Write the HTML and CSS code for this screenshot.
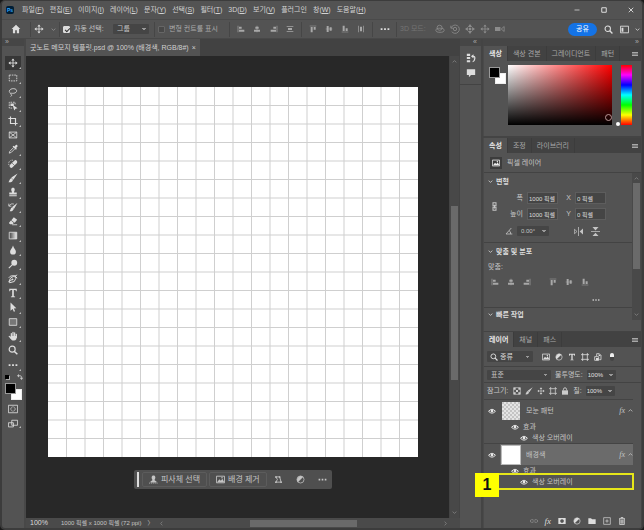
FILE: index.html
```html
<!DOCTYPE html>
<html lang="ko">
<head>
<meta charset="utf-8">
<title>굿노트 메모지 템플릿.psd</title>
<link rel="stylesheet" href="styles.css">
</head>
<body>
<svg class="sprite" aria-hidden="true">
  <symbol id="home" viewBox="0 0 12 12"><path fill="currentColor" d="M6 1 .8 6H2.3v5H5V7.500h2V11h2.700V6h1.500z"/></symbol>
  <symbol id="move" viewBox="0 0 12 12"><path fill="none" stroke="currentColor" d="M6 2v8M2 6h8"/><path fill="currentColor" d="M6 .5 8 3H4zM6 11.500 8 9H4zM.5 6 3 4v4zM11.500 6 9 4v4z"/></symbol>
  <symbol id="pan3d" viewBox="0 0 12 12"><path fill="currentColor" d="M6 0 8.500 3.500h-5zM6 12l2.500-3.500h-5zM0 6l3.500-2.500v5zM12 6 8.500 3.500v5zM4.500 4.500h3v3h-3z"/></symbol>
  <symbol id="marquee" viewBox="0 0 12 12"><path fill="none" stroke="currentColor" stroke-dasharray="2 1" d="M1.500 2.500h9v7h-9z"/></symbol>
  <symbol id="lasso" viewBox="0 0 12 12"><path fill="none" stroke="currentColor" d="M3 7.500C-.5 5 3 1.500 7 2c5 .5 4 5 0 5.500-2 .4-4-.6-4 .6s2 .8 1.500 2L3 11.500"/></symbol>
  <symbol id="pick" viewBox="0 0 12 12"><path fill="none" stroke="currentColor" stroke-dasharray="2 1" d="M5 8.500H1.500v-7h7V4"/><path fill="currentColor" d="M3 3h4v3H3zM5.500 4.500l6 4.300-2.500.4-1.500 2.300z"/></symbol>
  <symbol id="crop" viewBox="0 0 12 12"><path fill="none" stroke="currentColor" stroke-width="1.400" d="M3 .5V9h8.500M.5 3H9v8.500"/></symbol>
  <symbol id="frame" viewBox="0 0 12 12"><path fill="none" stroke="currentColor" d="M1.500 2.500h9v7h-9zl9 7m0-7-9 7"/></symbol>
  <symbol id="dropper" viewBox="0 0 12 12"><path fill="none" stroke="currentColor" d="M7 4 2 9l-.5 2L4 10l4.500-4.500"/><path fill="currentColor" d="m5.500 3 1-1L8 3c1-2 2-2.500 3-1.500s.5 2-1 3l.5 1.500-1 1z"/></symbol>
  <symbol id="heal" viewBox="0 0 12 12"><path stroke="currentColor" stroke-width="4.200" stroke-linecap="round" d="M4 8.500 9 3.500"/><path stroke="#535353" stroke-width=".8" d="m5 5 3 3"/><path fill="none" stroke="currentColor" stroke-dasharray="1 1" d="M1 7C0 3 3 1 6 1.500"/></symbol>
  <symbol id="brush" viewBox="0 0 12 12"><path fill="currentColor" d="M11.500.5 6.500 8 4 5.500zM4 6 6 8C5.500 11 3 11.500.5 11 2 10 1.500 7 4 6z"/></symbol>
  <symbol id="stamp" viewBox="0 0 12 12"><path fill="currentColor" d="M5 6.500C3 3 4 1 6 1s3 2 1 5.500h3.500V9h-9V6.500zM1.500 10h9v1h-9z"/></symbol>
  <symbol id="history" viewBox="0 0 12 12"><path fill="currentColor" d="M11.500 1 7.300 8 5 6zM5 6.200 7 8C6 11 4 11.500 2 11c1-1 1-4 3-4.800z"/><path fill="none" stroke="currentColor" d="M1 2v3h3M1.500 4.500C3 2 5 2 7 2.500"/></symbol>
  <symbol id="eraser" viewBox="0 0 12 12"><path fill="currentColor" d="m7 1.500 4 3L8 8 4 5zM3.500 5.500 7 8.500 5.500 10h-3L1 8.500z"/><path stroke="currentColor" d="M5 10.500h6"/></symbol>
  <symbol id="gradient" viewBox="0 0 12 12"><linearGradient id="fade"><stop stop-color="#444"/><stop offset="1" stop-color="#eee"/></linearGradient><path fill="url(#fade)" stroke="currentColor" d="M1.500 1.500h9v8h-9z"/></symbol>
  <symbol id="drop" viewBox="0 0 12 12"><path fill="currentColor" d="M6 .5C7 4 9.500 5.500 9.500 8a3.500 3.500 0 0 1-7 0C2.500 5.500 5 4 6 .5z"/></symbol>
  <symbol id="dodge" viewBox="0 0 12 12"><circle cx="7.500" cy="4.500" r="3.500" fill="currentColor"/><path stroke="currentColor" stroke-width="1.300" d="M5 7 1 11"/></symbol>
  <symbol id="pen" viewBox="0 0 12 12"><path fill="none" stroke="currentColor" stroke-width="1.200" d="M1 9.500 3 5l4-2.500L9.500 5 7.500 9 2 10.500zl4-3M1 4.500C4 0 8 4 11 1M8 2l3 3"/><circle cx="5.500" cy="6.500" r="1" fill="currentColor"/></symbol>
  <symbol id="type" viewBox="0 0 12 12"><path fill="currentColor" d="M1.500 1h9v3h-1l-.5-1.500H7V10l1.500.3V11h-5v-.7L5 10V2.500H3L2.500 4h-1z"/></symbol>
  <symbol id="arrow" viewBox="0 0 12 12"><path fill="currentColor" d="M3 .5 10 7.500 7 7.700 8.500 11 7 11.700 5.500 8.500 3 10.500z"/></symbol>
  <symbol id="rect" viewBox="0 0 12 12"><path fill="#777" stroke="currentColor" d="M1.500 2h9v8h-9z"/></symbol>
  <symbol id="hand" viewBox="0 0 12 12"><path fill="none" stroke="currentColor" stroke-width="1.500" stroke-linecap="round" d="M4 7V3m2 4V1.500M8 7V2.300M10 7.500V4M1.500 6.500 4 9"/><path fill="currentColor" d="M3.300 6h7.400c0 3-1 5.500-3.500 5.500S4.500 11 3 9z"/></symbol>
  <symbol id="zoom" viewBox="0 0 12 12"><circle cx="5" cy="5" r="3.600" fill="none" stroke="currentColor" stroke-width="1.400"/><path stroke="currentColor" stroke-width="1.800" d="m7.700 7.700 3.500 3.500"/></symbol>
  <symbol id="dots" viewBox="0 0 12 12"><path fill="currentColor" d="M.8 5H3v2.200H.8zM4.900 5h2.200v2.200H4.900zM9 5h2.200v2.200H9z"/></symbol>
  <symbol id="mask" viewBox="0 0 12 12"><path fill="none" stroke="currentColor" d="M.5 1.500h11v9H.5z"/><circle cx="6" cy="6" r="2.600" fill="none" stroke="currentColor" stroke-dasharray="1 .5"/></symbol>
  <symbol id="screen" viewBox="0 0 12 12"><path fill="#535353" stroke="currentColor" d="M4.500 1.500h7v6h-7zM.5 4.500h6v5h-6z"/></symbol>
  <symbol id="swap" viewBox="0 0 12 12"><path fill="none" stroke="currentColor" stroke-width="1.800" d="M3 3.500h3.500Q9 3.500 9 7v1"/><path fill="currentColor" d="M0 3.500 4 0v7zM5.500 7.500h7L9 12z"/></symbol>
  <symbol id="al" viewBox="0 0 12 12"><path fill="currentColor" d="M1 1h1v10H1zM3 2.500h4v3H3zM3 7h8v3H3z"/></symbol>
  <symbol id="ac" viewBox="0 0 12 12"><path fill="currentColor" d="M5.500 1h1v10h-1zM3.500 2.500h5v3h-5zM1.500 7h9v3h-9z"/></symbol>
  <symbol id="ar" viewBox="0 0 12 12"><path fill="currentColor" d="M10 1h1v10h-1zM5 2.500h4v3H5zM1 7h8v3H1z"/></symbol>
  <symbol id="at" viewBox="0 0 12 12"><path fill="currentColor" d="M1 1h10v1H1zM2.500 3h3v8h-3zM7 3h3v4H7z"/></symbol>
  <symbol id="am" viewBox="0 0 12 12"><path fill="currentColor" d="M1 5.500h10v1H1zM2.500 1.500h3v9h-3zM7 3.500h3v5H7z"/></symbol>
  <symbol id="ab" viewBox="0 0 12 12"><path fill="currentColor" d="M1 10h10v1H1zM2.500 1h3v8h-3zM7 5h3v4H7z"/></symbol>
  <symbol id="dv" viewBox="0 0 12 12"><path fill="currentColor" d="M1 1.500h10v1H1zM1 9.500h10v1H1zM3 4.500h6v3H3z"/></symbol>
  <symbol id="dh" viewBox="0 0 12 12"><path fill="currentColor" d="M1.500 1h1v10h-1zM9.500 1h1v10h-1zM4.500 2.500h3v7h-3z"/></symbol>
  <symbol id="orbit" viewBox="0 0 12 12"><ellipse cx="6" cy="7.500" rx="5" ry="2.500" fill="none" stroke="currentColor"/><circle cx="5.500" cy="4.500" r="3" fill="none" stroke="currentColor"/></symbol>
  <symbol id="roll" viewBox="0 0 12 12"><path fill="none" stroke="currentColor" d="M1 2v3h3M1.500 4.500A5 5 0 1 1 2 9"/><circle cx="6" cy="6" r="2" fill="none" stroke="currentColor"/></symbol>
  <symbol id="camera" viewBox="0 0 12 12"><path fill="currentColor" d="M0 3.500h6.500v5H0z"/><path fill="none" stroke="currentColor" d="M11 3 7.500 6 11 9z"/></symbol>
  <symbol id="layout" viewBox="0 0 12 12"><path fill="none" stroke="currentColor" stroke-width="1.200" d="M.6 1.600h10.800v8.800H.6z"/><path fill="currentColor" d="M2 3.500h2.500V9H2z"/></symbol>
  <symbol id="chev" viewBox="0 0 12 12"><path fill="none" stroke="currentColor" stroke-width="1.800" d="m1.500 4 4.500 4 4.500-4"/></symbol>
  <symbol id="min" viewBox="0 0 12 12"><path stroke="currentColor" stroke-width="1.500" d="M1 6h10"/></symbol>
  <symbol id="max" viewBox="0 0 12 12"><path fill="none" stroke="currentColor" stroke-width="2" d="M1.500 1.500h9v9h-9z"/></symbol>
  <symbol id="close" viewBox="0 0 12 12"><path stroke="currentColor" stroke-width="1.800" d="m1.500 1.500 9 9m0-9-9 9"/></symbol>
  <symbol id="burger" viewBox="0 0 12 12"><path stroke="currentColor" stroke-width="2" d="M0 3h12M0 6h12M0 9h12"/></symbol>
  <symbol id="actions" viewBox="0 0 12 12"><path fill="currentColor" d="M1 1h4v2.500H1zM1 4.800h4v2.500H1zM1 8.600h4v2.500H1z"/><path fill="none" stroke="currentColor" stroke-width="1.500" d="M7 4h2q2 0 1.500 3T8 10.500"/><path fill="currentColor" d="M6 4 9 1.500v5z"/></symbol>
  <symbol id="comment" viewBox="0 0 12 12"><path fill="currentColor" d="M1 1.500h10v7H6L3.500 11V8.500H1z"/></symbol>
  <symbol id="image" viewBox="0 0 12 12"><path fill="none" stroke="currentColor" stroke-width="1.200" d="M.6 1.600h10.800v8.800H.6z"/><path fill="currentColor" d="m1.500 9.500 3-4 2 2 2-2.500 2.500 4.500z"/><circle cx="8" cy="3.800" r="1" fill="currentColor"/></symbol>
  <symbol id="person" viewBox="0 0 12 12"><path fill="currentColor" d="M6 .8c3 0 3 3.700 1.500 5.500V7L10 8.500V10H2V8.500L4.500 7v-.7C3 4.500 3 .8 6 .8z"/><path stroke="currentColor" stroke-dasharray="1.500 1" d="M0 10.800h12"/></symbol>
  <symbol id="shape" viewBox="0 0 12 12"><path fill="none" stroke="currentColor" stroke-width="1.200" d="M2.500 2.500h5l2 7h-7L4.500 6z"/><path fill="currentColor" d="M1.500 1.500h2v2h-2zM6.500 1.500h2v2h-2zM1.500 8.500h2v2h-2zM8.500 8.500h2v2h-2z"/></symbol>
  <symbol id="half" viewBox="0 0 12 12"><circle cx="6" cy="6" r="4.700" fill="none" stroke="currentColor"/><path fill="currentColor" d="M9.500 2.500a5 5 0 0 0-7 7z"/></symbol>
  <symbol id="link" viewBox="0 0 12 12"><path fill="none" stroke="currentColor" stroke-width="1.400" d="M4 1h4v4H4zM4 7h4v4H4zM6 3.500v5"/></symbol>
  <symbol id="chain" viewBox="0 0 12 12"><path fill="none" stroke="currentColor" stroke-width="1.300" d="M5 4H2.500a2 2 0 0 0 0 4H5m2-4h2.500a2 2 0 0 1 0 4H7M4 6h4"/></symbol>
  <symbol id="angle" viewBox="0 0 12 12"><path fill="none" stroke="currentColor" stroke-width="1.200" d="M11 10.500H1.500L9.500 1.500M6 5.500q3 1 2.500 5"/></symbol>
  <symbol id="fliph" viewBox="0 0 12 12"><path fill="currentColor" d="M12 2v8L7.500 6zM5.500 0h1v12h-1z"/><path fill="none" stroke="currentColor" d="M.5 3v6L4 6z"/></symbol>
  <symbol id="flipv" viewBox="0 0 12 12"><path fill="currentColor" d="M2 12h8L6 7.500zM2 0h8L6 4.500zM0 5.500h12v1H0z"/></symbol>
  <symbol id="artb" viewBox="0 0 12 12"><path fill="none" stroke="currentColor" stroke-width="1.200" d="M2.500 0v12M9.500 0v12M0 2.500h12M0 9.500h12"/></symbol>
  <symbol id="smart" viewBox="0 0 12 12"><path fill="none" stroke="currentColor" stroke-width="1.200" d="M4 5V1h4l2.500 2.500V10H8M1 5.500h6V11H1z"/><path fill="currentColor" d="M3 7.500h4V11H3zM7 1l3.500 3.500H7z"/></symbol>
  <symbol id="checker" viewBox="0 0 12 12"><path fill="none" stroke="currentColor" d="M1 1h10v10H1z"/><path fill="currentColor" d="M1 1h3v3H1zM8 1h3v3H8zM4.500 4.500h3v3h-3zM1 8h3v3H1zM8 8h3v3H8z"/></symbol>
  <symbol id="lock" viewBox="0 0 12 12"><path fill="currentColor" d="M1.500 5h9v6.500h-9z"/><path fill="none" stroke="currentColor" stroke-width="1.400" d="M3.700 5V3.500a2.300 2.300 0 0 1 4.600 0V5"/></symbol>
  <symbol id="eye" viewBox="0 0 14 10"><path fill="none" stroke="currentColor" stroke-width="1.700" d="M1 5.500Q7-1.500 13 5.500 7 12 1 5.500z"/><circle cx="7" cy="5" r="2.400" fill="currentColor"/></symbol>
  <symbol id="addmask" viewBox="0 0 12 12"><path fill="currentColor" fill-rule="evenodd" d="M.5 1.500h11v9H.5zM6 3.300a2.700 2.700 0 1 0 .1 0z"/></symbol>
  <symbol id="folder" viewBox="0 0 12 12"><path fill="currentColor" d="M.5 2h4L6 3.500h5.500v7H.5z"/></symbol>
  <symbol id="plus" viewBox="0 0 12 12"><path fill="none" stroke="currentColor" d="M1 1h10v10H1zM6 3.500v5M3.500 6h5"/></symbol>
  <symbol id="trash" viewBox="0 0 12 12"><path fill="none" stroke="currentColor" stroke-width="1.200" d="M1.500 2.500h9M4.500 2V.8h3V2M2.500 3v8.300h7V3M4.500 4v6M6 4v6m1.500-6v6"/></symbol>
</svg>

<div class="app">
  <header class="titlebar">
    <span class="logo">Ps</span>
    <nav class="menu">
      <button>파일(<u>F</u>)</button><button>편집(<u>E</u>)</button><button>이미지(<u>I</u>)</button><button>레이어(<u>L</u>)</button><button>문자(<u>Y</u>)</button><button>선택(<u>S</u>)</button><button>필터(<u>T</u>)</button><button>3D(<u>D</u>)</button><button>보기(<u>V</u>)</button><button>플러그인</button><button>창(<u>W</u>)</button><button>도움말(<u>H</u>)</button>
    </nav>
    <div class="window-buttons">
      <button aria-label="최소화"><svg class="i6"><use href="#min"/></svg></button>
      <button aria-label="최대화"><svg class="i6"><use href="#max"/></svg></button>
      <button aria-label="닫기"><svg class="i6"><use href="#close"/></svg></button>
    </div>
  </header>

  <div class="options">
    <div class="group center"><button aria-label="홈"><svg class="i10"><use href="#home"/></svg></button></div>
    <div class="group center"><svg class="i10"><use href="#move"/></svg><svg class="i5 dim"><use href="#chev"/></svg></div>
    <div class="group auto-select">
      <label><input type="checkbox" checked>자동 선택:</label>
      <select aria-label="선택 대상"><option>그룹</option></select>
    </div>
    <div class="group"><label class="muted"><input type="checkbox">변형 컨트롤 표시</label></div>
    <div class="group spread soft"><svg class="i8"><use href="#al"/></svg><svg class="i8"><use href="#ac"/></svg><svg class="i8"><use href="#ar"/></svg><svg class="i8"><use href="#dv"/></svg></div>
    <div class="group spread soft"><svg class="i8"><use href="#at"/></svg><svg class="i8"><use href="#am"/></svg><svg class="i8"><use href="#ab"/></svg><svg class="i8"><use href="#dh"/></svg></div>
    <div class="group center"><svg class="i10"><use href="#dots"/></svg></div>
    <div class="group mode3d"><span>3D 모드:</span><svg class="i10"><use href="#orbit"/></svg><svg class="i10"><use href="#roll"/></svg><svg class="i10"><use href="#pan3d"/></svg><svg class="i10"><use href="#move"/></svg><svg class="i10"><use href="#camera"/></svg></div>
    <div class="group actions">
      <button class="share">공유</button>
      <button aria-label="검색"><svg class="i9"><use href="#zoom"/></svg></button>
      <button aria-label="작업 영역" class="workspace-button"><svg class="i9"><use href="#layout"/></svg><svg class="i5"><use href="#chev"/></svg></button>
    </div>
  </div>

  <main class="workspace">
    <aside class="toolbar">
      <div class="collapse">»</div>
      <div class="tools">
        <button class="on" aria-label="이동"><svg><use href="#move"/></svg></button>
        <button aria-label="선택 윤곽"><svg><use href="#marquee"/></svg></button>
        <button aria-label="올가미"><svg><use href="#lasso"/></svg></button>
        <button aria-label="개체 선택"><svg><use href="#pick"/></svg></button>
        <button aria-label="자르기"><svg><use href="#crop"/></svg></button>
        <button class="single" aria-label="프레임"><svg><use href="#frame"/></svg></button>
        <button aria-label="스포이드"><svg><use href="#dropper"/></svg></button>
        <button aria-label="복구 브러시"><svg><use href="#heal"/></svg></button>
        <button aria-label="브러시"><svg><use href="#brush"/></svg></button>
        <button aria-label="복제 도장"><svg><use href="#stamp"/></svg></button>
        <button aria-label="작업 내역 브러시"><svg><use href="#history"/></svg></button>
        <button aria-label="지우개"><svg><use href="#eraser"/></svg></button>
        <button aria-label="그레이디언트"><svg><use href="#gradient"/></svg></button>
        <button aria-label="흐림 효과"><svg><use href="#drop"/></svg></button>
        <button aria-label="닷지"><svg><use href="#dodge"/></svg></button>
        <button aria-label="펜"><svg><use href="#pen"/></svg></button>
        <button aria-label="문자"><svg><use href="#type"/></svg></button>
        <button aria-label="패스 선택"><svg><use href="#arrow"/></svg></button>
        <button aria-label="사각형"><svg><use href="#rect"/></svg></button>
        <button aria-label="손"><svg><use href="#hand"/></svg></button>
        <button class="single" aria-label="돋보기"><svg><use href="#zoom"/></svg></button>
        <button aria-label="도구 모음 편집"><svg><use href="#dots"/></svg></button>
      </div>
      <div class="mini"><span class="mini-swatch"></span><svg class="i6"><use href="#swap"/></svg></div>
      <div class="swatches"><i class="fg"></i><i class="bg"></i></div>
      <div class="view-tools">
        <button class="single" aria-label="빠른 마스크"><svg><use href="#mask"/></svg></button>
        <button aria-label="화면 모드"><svg><use href="#screen"/></svg></button>
      </div>
    </aside>

    <section class="document">
      <div class="doc-tabs"><div class="doc-tab">굿노트 메모지 템플릿.psd @ 100% (배경색, RGB/8#)<button aria-label="탭 닫기">×</button></div></div>
      <div class="stage">
        <svg class="artboard" viewBox="0 0 20 20"><path d="M1 0v20M2 0v20M3 0v20M4 0v20M5 0v20M6 0v20M7 0v20M8 0v20M9 0v20M10 0v20M11 0v20M12 0v20M13 0v20M14 0v20M15 0v20M16 0v20M17 0v20M18 0v20M19 0v20M0 1h20M0 2h20M0 3h20M0 4h20M0 5h20M0 6h20M0 7h20M0 8h20M0 9h20M0 10h20M0 11h20M0 12h20M0 13h20M0 14h20M0 15h20M0 16h20M0 17h20M0 18h20M0 19h20"/></svg>
        <div class="context-bar">
          <span class="grip"></span>
          <button class="boxed"><svg class="i9"><use href="#person"/></svg>피사체 선택</button>
          <button class="boxed"><svg class="i9"><use href="#image"/></svg>배경 제거</button>
          <button aria-label="변형"><svg class="i9"><use href="#shape"/></svg></button>
          <button aria-label="조정"><svg class="i9"><use href="#half"/></svg></button>
          <button aria-label="더 보기"><svg class="i9"><use href="#dots"/></svg></button>
        </div>
      </div>
      <div class="vscroll"><svg class="i5 up"><use href="#chev"/></svg><span class="thumb"></span><svg class="i5"><use href="#chev"/></svg></div>
      <footer class="status">
        <span class="percent">100%</span><span class="size">1000 픽셀 x 1000 픽셀 (72 ppi)</span><span class="next">〉</span>
        <div class="hscroll"><svg class="i5 left"><use href="#chev"/></svg><span class="thumb"></span><svg class="i5 right"><use href="#chev"/></svg></div>
      </footer>
    </section>

    <aside class="dock">
      <div class="collapse">«</div>
      <div class="dock-icons">
        <button aria-label="작업 내역"><svg class="i10"><use href="#actions"/></svg></button>
        <button aria-label="댓글"><svg class="i10"><use href="#comment"/></svg></button>
      </div>
    </aside>

    <aside class="panels">
      <div class="collapse">»</div>
      <section class="panel color-panel">
        <div class="tabs"><button class="active">색상</button><button>색상 견본</button><button>그레이디언트</button><button>패턴</button><svg class="i6"><use href="#burger"/></svg></div>
        <div class="picker">
          <div class="swatches"><i class="fg"></i><i class="bg"></i></div>
          <div class="field"><i class="ring"></i></div>
          <div class="hue"><i class="marker"></i></div>
        </div>
      </section>

      <section class="panel props-panel">
        <div class="tabs"><button class="active">속성</button><button>조정</button><button>라이브러리</button><svg class="i6"><use href="#burger"/></svg></div>
        <div class="kind"><span class="kind-icon"><svg class="i8"><use href="#image"/></svg></span>픽셀 레이어</div>
        <div class="props">
          <div class="props-body">
            <div class="section">
              <h2><svg class="i5"><use href="#chev"/></svg>변형</h2>
              <div class="transform">
                <svg class="i9 linked"><use href="#link"/></svg>
                <label for="w">폭</label><input id="w" value="1000 픽셀"><label for="x">X</label><input id="x" value="0 픽셀">
                <label for="h">높이</label><input id="h" value="1000 픽셀"><label for="y">Y</label><input id="y" value="0 픽셀">
              </div>
              <div class="rotate"><svg class="i8"><use href="#angle"/></svg><select aria-label="각도"><option>0.00°</option></select><svg class="i9 fliph"><use href="#fliph"/></svg><svg class="i9"><use href="#flipv"/></svg></div>
            </div>
            <div class="section">
              <h2><svg class="i5"><use href="#chev"/></svg>맞춤 및 분포</h2>
              <p>맞춤:</p>
              <div class="align"><svg class="i8"><use href="#al"/></svg><svg class="i8"><use href="#ac"/></svg><svg class="i8"><use href="#ar"/></svg><svg class="i8 split"><use href="#at"/></svg><svg class="i8"><use href="#am"/></svg><svg class="i8"><use href="#ab"/></svg></div>
              <div class="more"><svg class="i8"><use href="#dots"/></svg></div>
            </div>
            <div class="section quick"><h2><svg class="i5"><use href="#chev"/></svg>빠른 작업</h2></div>
          </div>
          <div class="props-scroll"><svg class="i5 up"><use href="#chev"/></svg><span class="thumb"></span><svg class="i5"><use href="#chev"/></svg></div>
        </div>
      </section>

      <section class="panel layers-panel">
        <div class="tabs"><button class="active">레이어</button><button>채널</button><button>패스</button><svg class="i6"><use href="#burger"/></svg></div>
        <div class="filter-row">
          <svg class="i8 search"><use href="#zoom"/></svg><select aria-label="필터 종류"><option>종류</option></select>
          <svg class="i8"><use href="#image"/></svg><svg class="i8"><use href="#half"/></svg><svg class="i8"><use href="#type"/></svg><svg class="i8"><use href="#artb"/></svg><svg class="i8"><use href="#smart"/></svg><i class="toggle"></i>
        </div>
        <div class="blend-row">
          <select aria-label="혼합 모드" class="blend"><option>표준</option></select>
          <label for="op">불투명도:</label><select id="op" class="num"><option>100%</option></select>
        </div>
        <div class="lock-row">
          <span>잠그기:</span><svg class="i8"><use href="#checker"/></svg><svg class="i8"><use href="#brush"/></svg><svg class="i8"><use href="#move"/></svg><svg class="i8"><use href="#artb"/></svg><svg class="i8"><use href="#lock"/></svg>
          <label for="fill">칠:</label><select id="fill" class="num"><option>100%</option></select>
        </div>
        <div class="layer-list">
          <div class="layer"><svg class="eye"><use href="#eye"/></svg><div class="layer-main"><i class="thumbnail pattern"></i><span>모눈 패턴</span><em>fx</em><svg class="i5 up"><use href="#chev"/></svg></div></div>
          <div class="effect"><svg class="eye"><use href="#eye"/></svg>효과</div>
          <div class="effect sub"><svg class="eye"><use href="#eye"/></svg>색상 오버레이</div>
          <div class="layer selected"><svg class="eye"><use href="#eye"/></svg><div class="layer-main"><i class="thumbnail"></i><span>배경색</span><em>fx</em><svg class="i5 up"><use href="#chev"/></svg></div></div>
          <div class="effect"><svg class="eye"><use href="#eye"/></svg>효과</div>
          <div class="effect sub"><svg class="eye"><use href="#eye"/></svg>색상 오버레이<div class="callout"><b>1</b></div></div>
        </div>
        <div class="layer-footer">
          <button class="off" aria-label="레이어 연결"><svg class="i8"><use href="#chain"/></svg></button>
          <button class="fx">fx</button>
          <button aria-label="마스크 추가"><svg class="i8"><use href="#addmask"/></svg></button>
          <button aria-label="조정 레이어"><svg class="i8"><use href="#half"/></svg></button>
          <button aria-label="새 그룹"><svg class="i8"><use href="#folder"/></svg></button>
          <button aria-label="새 레이어"><svg class="i8"><use href="#plus"/></svg></button>
          <button aria-label="삭제"><svg class="i8"><use href="#trash"/></svg></button>
        </div>
      </section>
    </aside>
  </main>
</div>
</body>
</html>
```

FILE: styles.css
```css
* { box-sizing: border-box; }

:root {
  --face: #535353;
  --dark: #424242;
  --field: #454545;
  --text: #c4c4c4;
}

body {
  margin: 0;
  background: #1a1a1a;
  color: var(--text);
  font: 7px/10px "Liberation Sans", "Noto Sans CJK KR", sans-serif;
}

button, input, select { font: inherit; color: inherit; }
button { display: flex; align-items: center; padding: 0; border: 0; background: none; white-space: nowrap; }
svg { flex: none; display: block; }
h2, p { margin: 0; }
.sprite { position: absolute; width: 0; height: 0; }
.i5 { width: 5px; height: 5px; }
.i6 { width: 6px; height: 6px; }
.i8 { width: 8px; height: 8px; }
.i9 { width: 9px; height: 9px; }
.i10 { width: 10px; height: 10px; }
.up { transform: rotate(180deg); }
.left { transform: rotate(90deg); }
.right { transform: rotate(-90deg); }

.app {
  display: flex;
  flex-direction: column;
  min-height: 100vh;
  border: solid #3c3c3c;
  border-width: 1px 2px 2px;
  border-radius: 5px;
  background: var(--face);
  overflow: hidden;
}

/* title bar */
.titlebar { display: flex; align-items: center; height: 18px; padding: 0 8px 0 4px; }
.logo {
  width: 8px; height: 8px; border-radius: 2px;
  background: #001e36; color: #31a8ff;
  font-size: 5px; font-weight: bold; line-height: 8px; text-align: center;
}
.menu { display: flex; gap: 6px; margin-left: 8px; color: #d2d2d2; }
.window-buttons { display: flex; gap: 21px; margin-left: auto; color: #ddd; }

/* options bar */
.options {
  display: grid;
  grid-template-columns: 29px 29px 95px 75px 72px 71px 24px 110px 1fr;
  align-items: center;
  height: 20px;
  border-top: 1px solid #4a4a4a;
  border-bottom: 1px solid #484848;
}
.group { display: flex; align-items: center; height: 15px; padding: 0 3px; border-right: 1px solid #464646; white-space: nowrap; }
.group:nth-last-child(-n+2) { border: 0; }
.center { justify-content: center; gap: 7px; color: #ddd; }
.spread { justify-content: space-between; padding: 0 7px; }
.soft, .align { color: #a8a8a8; }
.dim { color: #999; }
.muted { color: #aaa; }
.group label { display: flex; align-items: center; gap: 4px; }
.auto-select { justify-content: space-between; padding-right: 5px; }
input[type="checkbox"] {
  appearance: none; width: 7px; height: 7px; margin: 0;
  border: 1px solid #666; border-radius: 1px; background: #484848;
}
input[type="checkbox"]:checked { border-color: #ddd; background: #ddd; }
input[type="checkbox"]:checked::before {
  content: ""; display: block; width: 4px; height: 2px; margin: 1px 0 0 1px;
  border: solid #333; border-width: 0 0 1px 1px; transform: rotate(-45deg);
}
select {
  appearance: none; height: 10px; min-width: 0; padding: 0 4px; margin: 0;
  border: 0; border-radius: 1px; line-height: 10px;
  background-color: var(--field);
  background-image: linear-gradient(45deg, transparent 50%, #999 50%), linear-gradient(-45deg, transparent 50%, #999 50%);
  background-size: 2px 2px;
  background-position: right 5px center, right 3px center;
  background-repeat: no-repeat;
}
.auto-select select { width: 36px; }
.mode3d { gap: 5px; color: #8c8c8c; }
.mode3d span { margin-right: 4px; color: #737373; }
.actions { justify-content: flex-end; gap: 7px; padding-right: 2px; color: #ddd; }
.share { justify-content: center; width: 29px; height: 13px; border-radius: 7px; background: #1473e6; color: #fff; }
.workspace-button { gap: 6px; }

/* workspace */
.workspace { flex: 1; display: grid; grid-template-columns: 24px 1fr 22px 160px; }
.collapse { height: 7px; background: #464646; color: #aaa; font-size: 7px; line-height: 6px; }

.toolbar { border-right: 2px solid #484848; }
.toolbar .collapse { padding-left: 3px; }
.tools { display: grid; grid-template-rows: repeat(22, 1fr); height: 316px; margin: 10px 0 0 3px; }
.toolbar button { position: relative; justify-content: center; width: 16px; color: #ddd; }
.toolbar button svg { width: 10px; height: 10px; }
.tools .on { background: #373737; }
.toolbar button::after {
  content: ""; position: absolute; right: 0; bottom: 1px;
  border: 1px solid; border-color: transparent #bbb #bbb transparent;
}
.toolbar .single::after { display: none; }
.mini { display: flex; justify-content: space-between; align-items: center; height: 10px; padding: 0 1px 0 3px; }
.mini-swatch { width: 4px; height: 4px; background: #000; box-shadow: 1px 1px 0 #aaa; }
.swatches { display: grid; grid-template: 6px 11px / 6px 11px; }
.swatches i { width: 11px; height: 11px; border: 1px solid #999; }
.swatches .fg { grid-area: 1 / 1; z-index: 1; background: #000; }
.swatches .bg { grid-area: 2 / 2; background: #fff; border-color: #eee; }
.toolbar .swatches { margin: 1px 0 0 3px; }
.view-tools { display: grid; gap: 5px; margin: 4px 0 0 3px; }

.document {
  display: grid;
  grid-template: 17px 1fr 10px / 1fr 11px;
}
.doc-tabs { grid-column: 1 / 3; display: flex; background: #424242; }
.doc-tab { display: flex; align-items: center; gap: 3px; padding: 0 4px; background: #535353; color: #d0d0d0; white-space: nowrap; }
.stage { background: #282828; padding: 31px 31px 0 22px; }
.artboard { width: 100%; aspect-ratio: 1; background: #fff; }
.artboard path { fill: none; stroke: #cfcfcf; stroke-width: 1px; vector-effect: non-scaling-stroke; }
.context-bar {
  display: flex; align-items: center; gap: 2px;
  width: 198px; height: 19px; margin: 13px auto 0; padding: 0 0 0 3px;
  border-radius: 2px; background: #4f4f4f;
  font-size: 8px;
}
.grip { width: 2px; height: 15px; margin-right: 1px; background: #ddd; }
.context-bar button { justify-content: center; flex: 1; height: 15px; gap: 3px; }
.context-bar .boxed { flex: none; padding: 0 6px; border: 1px solid #5c5c5c; border-radius: 2px; }
.vscroll { display: flex; flex-direction: column; align-items: center; justify-content: space-between; padding: 3px 0; background: #484848; border: solid #434343; border-width: 0 1px; color: #888; }
.vscroll .thumb { width: 7px; height: 38%; margin-top: 12px; background: #6a6a6a; }
.status { grid-column: 1 / 3; display: flex; align-items: center; background: #4a4a4a; white-space: nowrap; }
.percent { width: 31px; padding-left: 4px; color: #ddd; }
.size { padding: 0 6px 0 4px; font-size: 6px; }
.next { width: 12px; font-size: 6px; }
.hscroll { flex: 1; display: flex; align-items: center; justify-content: space-between; padding: 0 12px 0 0; color: #888; }
.hscroll .thumb { width: 107px; height: 7px; background: #6a6a6a; }

.dock { border-right: 1px solid #444; }
.dock .collapse { padding-right: 4px; text-align: right; }
.dock-icons { display: grid; gap: 5px; justify-content: center; padding: 7px 0 6px; border-bottom: 1px solid #434343; color: #ddd; }

/* panels */
.panels { display: flex; flex-direction: column; padding: 0 1px; background: #444; }
.panels .collapse { padding-right: 2px; text-align: right; }
.panel { background: var(--face); border-left: 1px solid #4a4a4a; }
.tabs { display: flex; align-items: stretch; height: 15px; padding-right: 3px; background: var(--dark); color: #a8a8a8; }
.tabs button { padding: 0 5px; border-right: 1px solid #3c3c3c; }
.tabs .active { background: var(--face); color: #e8e8e8; font-weight: bold; }
.tabs svg { margin: auto 0 auto auto; }
.picker { display: flex; height: 75px; padding: 4px 9px 11px 5px; }
.picker .swatches { margin: 2px 2px 0 0; }
.field {
  flex: 1; position: relative;
  background: linear-gradient(transparent, #000), linear-gradient(90deg, #fff, #f00);
}
.ring { position: absolute; right: 0; bottom: 4px; width: 7px; height: 7px; border: 1px solid #b99; border-radius: 50%; }
.hue {
  position: relative; width: 11px; margin-left: 9px;
  background: linear-gradient(#f00, #f0f, #00f, #0ff, #0f0, #ff0, #f00);
}
.marker { position: absolute; left: -5px; bottom: -1px; width: 4px; height: 4px; border-radius: 50%; background: #fff; }

.props-panel { margin-top: 2px; padding-bottom: 11px; }
.kind { display: flex; align-items: center; gap: 5px; height: 20px; padding-left: 6px; border-bottom: 1px solid #434343; }
.kind-icon { display: grid; place-items: center; width: 12px; height: 12px; background: #3c3c3c; color: #eee; }
.props { display: grid; grid-template-columns: 1fr 9px; min-height: 147px; }
.section { padding: 3px 4px 0; border-bottom: 1px solid #434343; }
.section h2 { display: flex; align-items: center; gap: 3px; font-size: 7px; line-height: 11px; color: #ddd; }
.transform {
  display: grid; grid-template-columns: 14px 17px 31px 9px 31px;
  gap: 4px; align-items: center; margin-top: 5px;
}
.transform .linked { grid-row: 1 / 3; margin-left: 2px; }
.transform label { text-align: right; }
.transform input { width: 100%; height: 12px; padding: 0 1px; border: 1px solid #5d5d5d; background: var(--field); font-size: 6px; color: #ddd; }
.rotate { display: flex; align-items: center; height: 22px; padding-left: 17px; gap: 4px; }
.rotate select { width: 32px; font-size: 6px; }
.rotate .fliph { margin-left: 21px; }
.rotate svg:last-child { margin-left: 4px; }
.section p { margin: 5px 0 0; }
.align { display: flex; gap: 8px; margin: 6px 3px 0; }
.align .split { margin-left: 10px; }
.more { display: flex; justify-content: flex-end; padding: 10px 28px 3px 0; }
.quick { padding-top: 1px; border: 0; }
.props-scroll { display: flex; flex-direction: column; align-items: center; padding: 3px 0; background: #494949; color: #888; }
.props-scroll .thumb { width: 7px; height: 86px; margin: 2px 0 auto; background: #6a6a6a; }

.layers-panel { display: flex; flex-direction: column; flex: 1; border-top: 1px solid #434343; }
.filter-row, .blend-row, .lock-row { display: flex; align-items: center; padding-left: 3px; }
.filter-row { height: 20px; gap: 5px; border-bottom: 1px solid #434343; color: #ddd; }
.filter-row .search { position: relative; z-index: 1; margin: 0 -16px 0 3px; }
.filter-row select { width: 46px; height: 11px; padding-left: 13px; margin-right: 4px; }
.toggle { width: 4px; height: 8px; margin-left: 3px; border-radius: 2px; background: linear-gradient(#eee 50%, #444 50%); }
.blend-row { height: 16px; gap: 4px; border-bottom: 1px solid #434343; }
.blend { width: 64px; }
.num { width: 29px; padding: 0 1px; color: #e0e0e0; font-size: 6px; }
.lock-row { height: 16px; gap: 4px; color: #ccc; }
.lock-row span { margin-right: 1px; }

.layer-list { flex: 1; padding-right: 8px; }
.layer { display: flex; height: 22px; align-items: center; border-top: 1px solid #444; }
.eye { width: 8px; height: 6px; color: #e8e8e8; }
.layer > .eye { margin: 0 4px; }
.layer-main { flex: 1; display: flex; align-items: center; height: 100%; padding: 0 0 0 2px; }
.selected .layer-main { background: #6b6b6b; }
.thumbnail { width: 18px; height: 18px; margin-right: 6px; background: #fff; }
.pattern { background: conic-gradient(#e4e4e4 25%, #c4c4c4 0 50%, #e4e4e4 0 75%, #c4c4c4 0) 0 0 / 4px 4px; }
.selected .thumbnail { outline: 1px solid #bbb; }
.layer-main em { margin: 0 3px 0 auto; font: italic 8px/10px "Liberation Serif", serif; }
.effect { position: relative; display: flex; align-items: center; gap: 4px; height: 11px; padding-left: 27px; }
.sub { padding-left: 36px; }
.callout { position: absolute; inset: -3px -1px -3px -9px; border: 2px solid #e6e619; }
.callout b { display: grid; place-items: center; width: 24px; height: 24px; margin: -2px; background: #ff0; color: #111; font-size: 16px; line-height: 24px; }
.layer-footer { display: flex; justify-content: flex-end; align-items: center; gap: 7px; height: 14px; padding-right: 15px; color: #ddd; }
.layer-footer .off { color: #888; }
.layer-footer .fx { font: italic 9px/10px "Liberation Serif", serif; }
```
